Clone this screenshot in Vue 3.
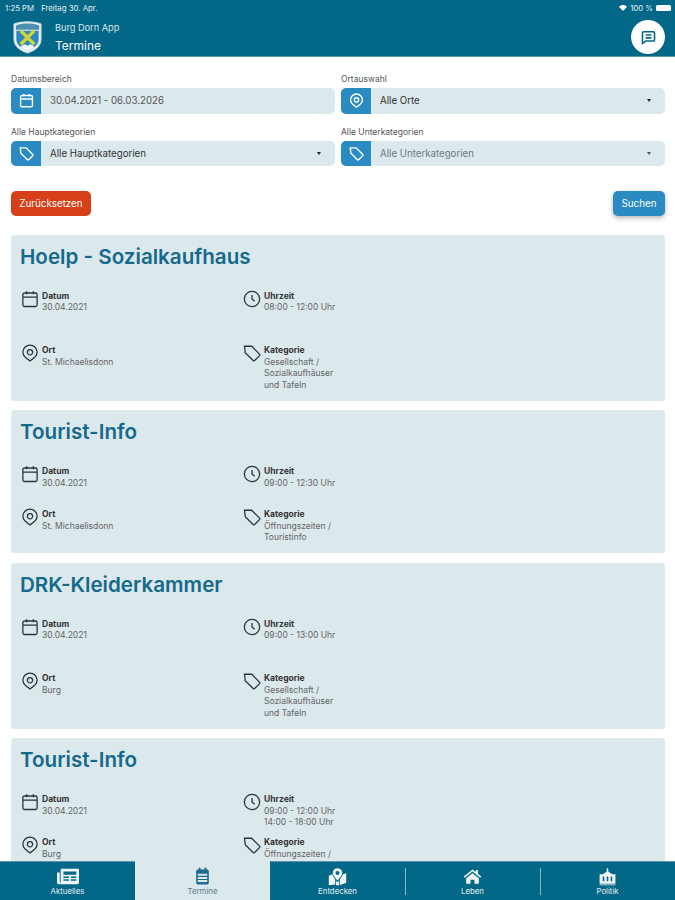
<script setup>
const outline = {
  calendar: 'M2.500 6a2 2 0 0 1 2-2h15a2 2 0 0 1 2 2v14a2 2 0 0 1-2 2h-15a2 2 0 0 1-2-2ZM2.500 9.500h19M7.500 1.500v4M16.500 1.500v4',
  clock: 'M12 1.800a10.200 10.200 0 1 0 0 20.400a10.200 10.200 0 0 0 0-20.400ZM12 6.500V12l3.500 3',
  pin: 'M12 1.500a9.500 9.500 0 0 0-9.500 9.500c0 5 4.700 8.500 9.500 11.500c4.800-3 9.500-6.500 9.500-11.500A9.500 9.500 0 0 0 12 1.500ZM12 7.500a3.500 3.500 0 1 0 0 7a3.500 3.500 0 0 0 0-7Z',
  tag: 'M2 3h9.500L22 13.500a1.500 1.500 0 0 1 0 2L15.500 22a1.500 1.500 0 0 1-2 0L3 11.500ZM7 7.500h.01'
}

const filters = [
  { label: 'Datumsbereich', icon: 'calendar', value: '30.04.2021 - 06.03.2026', kind: 'date' },
  { label: 'Ortauswahl', icon: 'pin', value: 'Alle Orte', kind: 'select' },
  { label: 'Alle Hauptkategorien', icon: 'tag', value: 'Alle Hauptkategorien', kind: 'select' },
  { label: 'Alle Unterkategorien', icon: 'tag', value: 'Alle Unterkategorien', kind: 'muted' }
]

const events = [
  { title: 'Hoelp - Sozialkaufhaus', time: ['08:00 - 12:00 Uhr'], place: 'St. Michaelisdonn', cat: ['Gesellschaft /', 'Sozialkaufhäuser', 'und Tafeln'] },
  { title: 'Tourist-Info', time: ['09:00 - 12:30 Uhr'], place: 'St. Michaelisdonn', cat: ['Öffnungszeiten /', 'Touristinfo'] },
  { title: 'DRK-Kleiderkammer', time: ['09:00 - 13:00 Uhr'], place: 'Burg', cat: ['Gesellschaft /', 'Sozialkaufhäuser', 'und Tafeln'] },
  { title: 'Tourist-Info', time: ['09:00 - 12:00 Uhr', '14:00 - 18:00 Uhr'], place: 'Burg', cat: ['Öffnungszeiten /', 'Touristinfo'] }
]

function cells(e) {
  return [
    { icon: 'calendar', head: 'Datum', lines: ['30.04.2021'] },
    { icon: 'clock', head: 'Uhrzeit', lines: e.time },
    { icon: 'pin', head: 'Ort', lines: [e.place] },
    { icon: 'tag', head: 'Kategorie', lines: e.cat }
  ]
}

const tabs = [
  { label: 'Aktuelles', d: 'M5 3h18a1 1 0 0 1 1 1v14a2 2 0 0 1-2 2H2a2 2 0 0 1-2-2V7h3v11h1V4a1 1 0 0 1 1-1Zm2 3v3.500h14V6Zm0 5.500V13h6v-1.500Zm8 0V13h6v-1.500Zm-8 3V16h6v-1.500Zm8 0V16h6v-1.500Z' },
  { label: 'Termine', active: true, d: 'M7 1h2.500v2h5V1H17v2h1a2 2 0 0 1 2 2v15a2 2 0 0 1-2 2H6a2 2 0 0 1-2-2V5a2 2 0 0 1 2-2h1ZM6 8.500V11h12V8.500ZM6 12.500V15h12v-2.500ZM6 16.500V19h12v-2.500Z' },
  { label: 'Entdecken', d: 'M12 1.500a6 6 0 0 1 6 6c0 3-3.500 6.500-6 9.500c-2.500-3-6-6.500-6-9.500a6 6 0 0 1 6-6Zm0 3.500a2.500 2.500 0 1 0 0 5a2.500 2.500 0 0 0 0-5ZM1 11l4.500-1.700c.8 2.500 2.500 5 3.500 6.500V22l-8 1ZM10 17l2 2.500 2-2.500v6h-4ZM18.500 9.500 23 8v12l-8 3v-7.500c1.500-1.800 3-4 3.500-6Z' },
  { label: 'Leben', d: 'M12 3l4 3.300V4h3v4.800l4 3.300-1.300 1.500L12 5.700 2.300 13.600 1 12.100ZM12 7.800l8 6.500V21h-5.500v-5h-5v5H4v-6.700Z' },
  { label: 'Politik', d: 'M12 1l1 1.500V6l5 3h4v12H2V9h4l5-3V2.500ZM2 22h20v1H2ZM6 12v6h2v-6Zm5 0v6h2v-6Zm5 0v6h2v-6Z' }
]
</script>

<template>
  <div class="app">
    <header class="top">
      <div class="status">
        <span class="status-left"><span>1:25 PM</span><span>Freitag 30. Apr.</span></span>
        <span class="status-right">
          <svg class="wifi" viewBox="0 0 12 9"><path d="M6 9 0 2.500C3.500-.8 8.500-.8 12 2.500Z" /></svg>
          <span>100 %</span>
          <span class="battery"></span>
        </span>
      </div>
      <div class="bar">
        <svg class="crest" viewBox="0 0 32 34">
          <path d="M2 3C10 0 22 0 30 3V19C30 27 22 31 16 33C10 31 2 27 2 19Z" fill="#e8f0f4" stroke="#c9d6dd" />
          <path d="M4.500 10H27.500V19C27.500 25 21 28.500 16 30.500C11 28.500 4.500 25 4.500 19Z" fill="#2f86bd" />
          <path d="M4 4.500C11 2 21 2 28 4.500V9H4Z" fill="#4c8fb0" />
          <path d="M9 10L23 24M23 10L9 24" stroke="#d0d63a" stroke-width="3.400" />
          <path d="M9 27c2-3.500 5-3.500 7-1.500c2-2 5-2 7 1.500c-2 1.500-5 3-7 3.500c-2-.5-5-2-7-3.500Z" fill="#f4f7f8" />
        </svg>
        <div class="titles">
          <div class="app-name">Burg Dorn App</div>
          <div class="page-name">Termine</div>
        </div>
        <button class="chat" aria-label="Nachrichten">
          <svg viewBox="0 0 24 24"><path d="M5 4h14a1.500 1.500 0 0 1 1.500 1.500v10A1.500 1.500 0 0 1 19 17H8l-4.500 3.500v-15A1.500 1.500 0 0 1 5 4ZM8 8.500h8M8 12.500h8" /></svg>
        </button>
      </div>
    </header>

    <main class="content">
      <section class="filters">
        <div v-for="f in filters" :key="f.label" class="field">
          <label>{{ f.label }}</label>
          <div class="control">
            <span class="addon">
              <svg viewBox="0 0 24 24"><path :d="outline[f.icon]" /></svg>
            </span>
            <span class="value" :class="f.kind">{{ f.value }}</span>
            <span v-if="f.kind !== 'date'" class="caret" :class="f.kind"></span>
          </div>
        </div>
      </section>

      <div class="actions">
        <button class="btn reset">Zurücksetzen</button>
        <button class="btn search">Suchen</button>
      </div>

      <article v-for="(e, i) in events" :key="i" class="card">
        <h2>{{ e.title }}</h2>
        <div class="grid">
          <div v-for="c in cells(e)" :key="c.head" class="cell">
            <svg viewBox="0 0 24 24"><path :d="outline[c.icon]" /></svg>
            <div class="text">
              <strong>{{ c.head }}</strong>
              <span v-for="l in c.lines" :key="l">{{ l }}</span>
            </div>
          </div>
        </div>
      </article>
    </main>

    <nav class="tabs">
      <a v-for="t in tabs" :key="t.label" class="tab" :class="{ active: t.active }">
        <svg viewBox="0 0 24 24"><path :d="t.d" fill-rule="evenodd" /></svg>
        <span>{{ t.label }}</span>
      </a>
    </nav>
  </div>
</template>

<style>
html, body { margin: 0; background: #fff; }
</style>

<style scoped>
.app {
  width: 675px;
  height: 900px;
  display: flex;
  flex-direction: column;
  overflow: hidden;
  font-family: Inter, "Liberation Sans", sans-serif;
  color: #333;
}
.top {
  height: 57px;
  flex: none;
  box-sizing: border-box;
  background: #036787;
  border-bottom: 1px solid #5c93a9;
  color: #fff;
}
.status {
  height: 13px;
  padding: 2px 4px 0 5px;
  box-sizing: border-box;
  display: flex;
  justify-content: space-between;
  align-items: center;
  font-size: 7.800px;
  color: #e6eff3;
}
.status-left { display: flex; gap: 7px; }
.status-right { display: flex; align-items: center; gap: 3px; }
.wifi { width: 8px; height: 6px; fill: #fff; }
.battery { width: 15px; height: 6px; border-radius: 1.500px; background: #fff; }
.bar {
  display: flex;
  align-items: flex-start;
  padding: 7px 10px 0 12px;
}
.crest { width: 31px; height: 33px; flex: none; margin-top: 1px; }
.titles { margin-left: 12px; padding-top: 2px; }
.app-name { font-size: 9.200px; line-height: 12px; color: #d9e6eb; }
.page-name { font-size: 12px; line-height: 15px; margin-top: 4px; }
.chat {
  margin-left: auto;
  width: 34px;
  height: 34px;
  border: 0;
  padding: 0;
  border-radius: 50%;
  background: #fff;
  display: flex;
  align-items: center;
  justify-content: center;
}
.chat svg { width: 17px; height: 17px; fill: none; stroke: #036787; stroke-width: 2.200; }

.content {
  flex: 1;
  min-height: 0;
  overflow: hidden;
  padding: 16px 10px 0 11px;
}
.filters {
  display: grid;
  grid-template-columns: 324px 324px;
  column-gap: 6px;
  row-gap: 12px;
}
.field label {
  display: block;
  font-size: 8.500px;
  line-height: 12px;
  margin-bottom: 3px;
  color: #555;
}
.control {
  height: 25.500px;
  display: flex;
  align-items: center;
  background: #dbe8ec;
  border-radius: 5px;
  overflow: hidden;
}
.addon {
  width: 30px;
  height: 100%;
  flex: none;
  background: #2a8ac2;
  display: flex;
  align-items: center;
  justify-content: center;
}
.addon svg { width: 15px; height: 15px; fill: none; stroke: #fff; stroke-width: 2.200; }
.value { margin-left: 9px; font-size: 9.700px; color: #333; }
.value.date { color: #555; }
.value.muted { color: #6f7a80; }
.caret {
  margin-left: auto;
  margin-right: 14px;
  border: 2.500px solid transparent;
  border-top: 3px solid #222;
  border-bottom: 0;
}
.caret.muted { border-top-color: #555; }

.actions {
  display: flex;
  justify-content: space-between;
  margin-top: 24.500px;
  margin-bottom: 19px;
}
.btn {
  height: 25px;
  border: 0;
  border-radius: 5px;
  color: #fff;
  font-family: inherit;
  font-size: 9.800px;
  padding: 0;
}
.reset { width: 80px; background: #d5401b; }
.search { width: 52px; background: #2a8ac2; box-shadow: 0 2px 5px rgba(0, 0, 0, .3); }

.card {
  background: #dbe8ec;
  border-radius: 4px;
  padding: 9px 10px 9.500px;
  margin-bottom: 9.600px;
}
.card h2 {
  margin: 0 0 20px -1px;
  font-size: 20.600px;
  line-height: 26px;
  font-weight: 600;
  color: #156a8c;
}
.grid {
  display: grid;
  grid-template-columns: 222px 222px;
  grid-auto-rows: 1fr;
  row-gap: 7.500px;
}
.cell { display: flex; align-items: flex-start; gap: 3.500px; }
.cell svg {
  width: 18px;
  height: 18px;
  flex: none;
  margin-left: -.5px;
  fill: none;
  stroke: #26353c;
  stroke-width: 1.700;
}
.text { display: flex; flex-direction: column; }
.text strong { font-size: 8.500px; line-height: 12.500px; font-weight: 700; color: #333; }
.text span { font-size: 8.500px; line-height: 11.500px; color: #666; }

.tabs {
  height: 39px;
  flex: none;
  background: #036787;
  display: grid;
  grid-template-columns: repeat(5, 1fr);
  position: relative;
  border-top: 1px solid #5c93a9;
  box-sizing: border-box;
}
.tab {
  display: flex;
  flex-direction: column;
  align-items: center;
  padding-top: 5px;
  color: #e4eef2;
  font-size: 7.800px;
  position: relative;
}
.tab svg { width: 19px; height: 19px; fill: #f0f5f7; margin-bottom: 0; }
.tab:first-child svg { width: 22px; height: 22px; margin: -1.500px 0; }
.tab.active { background: #dbe8ec; color: #5f7d8a; margin-top: -1px; padding-top: 6px; }
.tab.active svg { fill: #1f6d8c; }
.tab:nth-child(n+4)::before {
  content: "";
  position: absolute;
  left: 0;
  top: 6px;
  height: 27px;
  width: 1px;
  background: #8db4c3;
}
</style>
